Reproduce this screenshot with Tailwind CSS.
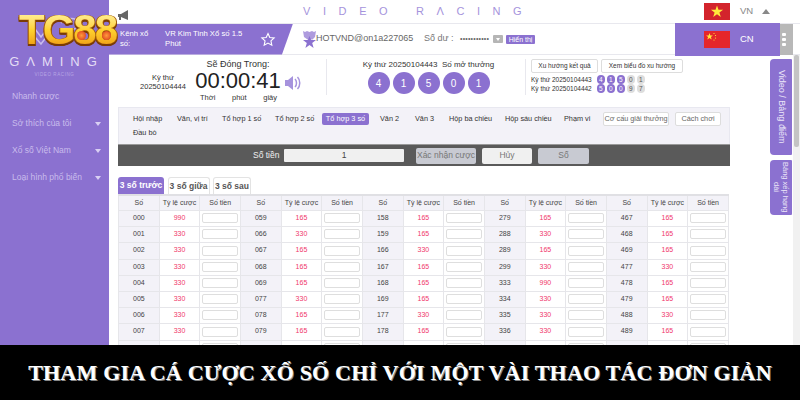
<!DOCTYPE html>
<html lang="vi">
<head>
    <meta charset="UTF-8">
    <title>Video Racing</title>
    <script src="https://cdn.jsdelivr.net/npm/@tailwindcss/browser@4"></script>
</head>
<body class="bg-white">
<div class="relative w-[800px] h-[400px] overflow-hidden flex font-['Liberation_Sans',sans-serif] text-[#333]">

    <!-- Sidebar -->
    <aside class="w-[109px] shrink-0 bg-[#8b71d0] text-[#c9bcec] text-[8.500px] pt-[54px]">
        <div class="text-center text-[#e4def5] text-[13px] tracking-[7px] pl-[4px] leading-[15px]">GΛMING</div>
        <div class="text-center text-[#b7a6e4] text-[4.500px] tracking-[0.6px] leading-[8px] mt-[2px]">VIDEO RACING</div>
        <ul class="mt-[4px]">
            <li class="h-[27px] pl-[12px] flex items-center">Nhanh cược</li>
            <li class="h-[27px] pl-[12px] pr-[8px] flex items-center justify-between">Sở thích của tôi<span class="border-x-[3px] border-t-[4px] border-x-transparent border-t-[#d9d0f3]"></span></li>
            <li class="h-[27px] pl-[12px] pr-[8px] flex items-center justify-between">Xổ số Việt Nam<span class="border-x-[3px] border-t-[4px] border-x-transparent border-t-[#d9d0f3]"></span></li>
            <li class="h-[27px] pl-[12px] pr-[8px] flex items-center justify-between">Loại hình phổ biến<span class="border-x-[3px] border-t-[4px] border-x-transparent border-t-[#d9d0f3]"></span></li>
        </ul>
    </aside>

    <main class="flex-1 min-w-0 flex flex-col">
        <!-- Top title -->
        <div class="h-[23px] shrink-0 flex items-center pl-[194px] text-[#a593dc] text-[11px] tracking-[12.600px] whitespace-nowrap">VIDEO RΛCING</div>

        <!-- Channel and account bar -->
        <div class="h-[32px] shrink-0 flex items-center border-y border-[#e8e8ee] text-[8px]">
            <div class="w-[184px] h-[31px] shrink-0 bg-[#8b71d0] [clip-path:polygon(0_0,100%_0,94%_100%,0_100%)] flex items-center text-white pl-[11px] text-[7.700px] leading-[10px]">
                <span class="w-[30px] mr-[15px]">Kênh xổ số:</span>
                <span class="w-[93px]">VR Kim Tinh Xổ số 1.5 Phút</span>
                <svg class="w-[16px] h-[15px] ml-[2px]" viewBox="0 0 24 24" fill="none" stroke="#fff" stroke-width="1.8"><path d="M12 2.500l2.900 6.300 6.900.8-5.100 4.700 1.400 6.800-6.100-3.400-6.100 3.400 1.400-6.800-5.100-4.700 6.900-.8z"/></svg>
            </div>
            <svg class="w-[13px] h-[17px] ml-[10px]" viewBox="0 0 13 17" fill="#8b71d0"><path d="M0 0l2 1 2-1 2.500 1L9 0l2 1 2-1-1 6-2.500 2.500h-5L1 6z" opacity=".7"/><path d="M6.500 5l1.600 4H13l-3.800 3 1.400 5-4.100-3-4.100 3 1.400-5L0 9h4.900z"/></svg>
            <span class="w-[108px] text-[#666] text-[9px] whitespace-nowrap">HOTVND@on1a227065</span>
            <span class="w-[36px] text-[#777] text-[9px] whitespace-nowrap">Số dư :</span>
            <span class="w-[33px] text-[#666] text-[7px] tracking-[0.2px] whitespace-nowrap">•••••••••••</span>
            <span class="w-[10px] h-[8px] bg-[#b5b5b5] rounded-[1px] flex items-center justify-center"><span class="border-x-[2.500px] border-t-[3px] border-x-transparent border-t-white"></span></span>
            <span class="w-[29px] bg-[#8b71d0] text-white text-[7px] h-[9px] leading-[9px] text-center rounded-[1px] ml-[3px] whitespace-nowrap">Hiển thị</span>
        </div>

        <!-- Timer, last result, trends -->
        <div class="h-[52px] shrink-0 flex pt-[4px]">
            <div class="w-[218px] shrink-0 flex border-r border-[#e8e8ee] h-[36px]">
                <div class="w-[86px] shrink-0 pt-[14px] pl-[30px] text-center text-[7.500px] leading-[9px]">
                    <div class="w-[48px]">Kỳ thứ<br>20250104444</div>
                </div>
                <div class="w-[86px] shrink-0 text-center">
                    <div class="text-[9px] leading-[10px] whitespace-nowrap">Sẽ Đóng Trong:</div>
                    <div class="text-[22px] leading-[22px] text-[#222] mt-[1px] whitespace-nowrap">00:00:41</div>
                    <div class="flex justify-between pl-[5px] pr-[4px] text-[7.500px] leading-[10px] mt-[1px]"><span>Thời</span><span>phút</span><span>giây</span></div>
                </div>
                <svg class="w-[18px] h-[18px] mt-[15px] ml-[3px]" viewBox="0 0 18 18" fill="#a693dd"><path d="M1 6h3l5-4v14l-5-4H1z"/><path d="M11 5c2 2 2 6 0 8M13.500 3c3 3 3 9 0 12" fill="none" stroke="#a693dd" stroke-width="1.500"/></svg>
            </div>
            <div class="w-[199px] shrink-0 flex flex-col items-center border-r border-[#e8e8ee] h-[36px] pl-[5px]">
                <div class="text-[8px] leading-[10px] mt-[1px] whitespace-nowrap">Kỳ thứ 20250104443 &nbsp;Số mở thưởng</div>
                <div class="flex gap-[3px] mt-[2px]">
                    <span class="w-[22px] h-[22px] rounded-full bg-[#8b71d0] text-white text-[10px] flex items-center justify-center">4</span>
                    <span class="w-[22px] h-[22px] rounded-full bg-[#8b71d0] text-white text-[10px] flex items-center justify-center">1</span>
                    <span class="w-[22px] h-[22px] rounded-full bg-[#8b71d0] text-white text-[10px] flex items-center justify-center">5</span>
                    <span class="w-[22px] h-[22px] rounded-full bg-[#8b71d0] text-white text-[10px] flex items-center justify-center">0</span>
                    <span class="w-[22px] h-[22px] rounded-full bg-[#8b71d0] text-white text-[10px] flex items-center justify-center">1</span>
                </div>
            </div>
            <div class="pl-[5px] text-[6.500px]">
                <div class="flex gap-[3px]">
                    <span class="w-[67px] h-[14px] border border-[#ddd] rounded-[2px] flex items-center justify-center whitespace-nowrap">Xu hướng kết quả</span>
                    <span class="w-[82px] h-[14px] border border-[#ddd] rounded-[2px] flex items-center justify-center whitespace-nowrap">Xem biểu đồ xu hướng</span>
                </div>
                <div class="flex items-center h-[9px] mt-[2px] gap-[1.500px] whitespace-nowrap">
                    <span class="w-[64px]">Kỳ thứ 20250104443</span>
                    <span class="w-[8.500px] h-[8.500px] rounded-full bg-[#8b71d0] text-white flex items-center justify-center">4</span>
                    <span class="w-[8.500px] h-[8.500px] rounded-full bg-[#8b71d0] text-white flex items-center justify-center">1</span>
                    <span class="w-[8.500px] h-[8.500px] rounded-full bg-[#8b71d0] text-white flex items-center justify-center">5</span>
                    <span class="w-[8.500px] h-[8.500px] rounded-full bg-[#ddd] text-[#555] flex items-center justify-center">0</span>
                    <span class="w-[8.500px] h-[8.500px] rounded-full bg-[#ddd] text-[#555] flex items-center justify-center">1</span>
                </div>
                <div class="flex items-center h-[9px] gap-[1.500px] whitespace-nowrap">
                    <span class="w-[64px]">Kỳ thứ 20250104442</span>
                    <span class="w-[8.500px] h-[8.500px] rounded-full bg-[#8b71d0] text-white flex items-center justify-center">5</span>
                    <span class="w-[8.500px] h-[8.500px] rounded-full bg-[#8b71d0] text-white flex items-center justify-center">0</span>
                    <span class="w-[8.500px] h-[8.500px] rounded-full bg-[#8b71d0] text-white flex items-center justify-center">0</span>
                    <span class="w-[8.500px] h-[8.500px] rounded-full bg-[#ddd] text-[#555] flex items-center justify-center">9</span>
                    <span class="w-[8.500px] h-[8.500px] rounded-full bg-[#ddd] text-[#555] flex items-center justify-center">7</span>
                </div>
            </div>
        </div>

        <div class="flex-1 min-h-0 flex">
            <div class="w-[621px] shrink-0 pl-[9px]">
                <!-- Play types -->
                <div class="h-[37px] bg-[#f3f2f8] border-t border-x border-[#e8e8f0] relative text-[7.300px] text-[#333]">
                    <div class="flex items-center h-[12px] mt-[5px] pl-[14px] whitespace-nowrap">
                        <span class="w-[44px]">Hội nhập</span>
                        <span class="w-[45px]">Văn, vị trí</span>
                        <span class="w-[53px]">Tổ hợp 1 số</span>
                        <span class="w-[47px]">Tổ hợp 2 số</span>
                        <span class="w-[47px] h-[12px] bg-[#8b71d0] text-white rounded-[2px] flex items-center justify-center mr-[11px]">Tổ hợp 3 số</span>
                        <span class="w-[35px]">Văn 2</span>
                        <span class="w-[34px]">Văn 3</span>
                        <span class="w-[56px]">Hộp ba chiều</span>
                        <span class="w-[59px]">Hộp sáu chiều</span>
                        <span class="w-[39px]">Phạm vi</span>
                        <span class="w-[66px] h-[14px] border border-[#ddd] bg-white rounded-[2px] flex items-center justify-center text-[#666] mr-[6px]">Cơ cấu giải thưởng</span>
                        <span class="w-[46px] h-[14px] border border-[#ddd] bg-white rounded-[2px] flex items-center justify-center text-[#666]">Cách chơi</span>
                    </div>
                    <div class="pl-[14px] mt-[2px] leading-[12px]">Đầu bò</div>
                </div>

                <!-- Stake bar -->
                <div class="h-[22px] bg-[#5a5a5a] border-t border-[#999] flex items-center text-[8.500px] pl-[135px] whitespace-nowrap">
                    <span class="w-[31px] text-[#efefef]">Số tiền</span>
                    <span class="w-[120px] h-[13px] bg-[#f0f0f0] rounded-[1px] text-[#444] flex items-center justify-center">1</span>
                    <span class="w-[60px] h-[16px] ml-[12px] bg-[#c8cad2] text-[#777] rounded-[2px] flex items-center justify-center">Xác nhận cược</span>
                    <span class="w-[50px] h-[16px] ml-[6px] bg-[#f0f0f0] text-[#777] rounded-[2px] flex items-center justify-center">Hủy</span>
                    <span class="w-[51px] h-[16px] ml-[6px] bg-[#c8cad2] text-[#777] rounded-[2px] flex items-center justify-center">Số</span>
                </div>

                <!-- Group tabs -->
                <div class="flex gap-[3.500px] mt-[11px] h-[17px] text-[8.500px] font-bold text-[#555] whitespace-nowrap">
                    <span class="w-[46px] bg-[#8b71d0] text-white rounded-t-[3px] flex items-center justify-center">3 số trước</span>
                    <span class="w-[42px] bg-white border border-b-0 border-[#e3e3e3] rounded-t-[3px] flex items-center justify-center">3 số giữa</span>
                    <span class="w-[38px] bg-white border border-b-0 border-[#e3e3e3] rounded-t-[3px] flex items-center justify-center">3 số sau</span>
                </div>

                <!-- Odds table -->
                <table class="w-[611px] table-fixed border-collapse border-t-2 border-[#e0e0e4] text-[7px] text-center text-[#444]">
                    <thead>
                        <tr id="headRow" class="h-[15px] bg-[#f3f2f8]"></tr>
                    </thead>
                    <tbody id="oddsBody"></tbody>
                </table>
            </div>

            <!-- Side tabs -->
            <div class="flex-1 flex flex-col pl-[40px] -mt-[48px] gap-[5px] text-white">
                <div class="w-[22px] h-[96px] bg-[#8b71d0] rounded-l-[4px] rounded-r-[1px] flex items-center justify-center [writing-mode:vertical-rl] whitespace-nowrap text-[9px] text-[#ebe6f8]">Video / Bảng điểm</div>
                <div class="w-[22px] h-[55px] bg-[#8b71d0] rounded-l-[4px] rounded-r-[1px] flex items-center justify-center [writing-mode:vertical-rl] text-center text-[7.500px] leading-[9px] text-[#ebe6f8]">Bảng xếp hạng dài</div>
            </div>
        </div>
    </main>

    <!-- Logo over sidebar edge -->
    <div class="absolute left-[19px] top-[9px] w-[100px] h-[42px]">
        <svg class="absolute left-[16px] top-[6px] w-[44px] h-[30px]" viewBox="0 0 44 30" fill="none" stroke="#c9bcec" stroke-width="1.500"><path d="M0 14l6 8 9-12M0 22l6 7 9-12"/><path d="M26 8c6-6 16-6 17 0 0 5-6 8-12 9"/></svg>
        <div class="absolute inset-0 text-[42px] leading-[42px] font-bold tracking-[-2px] bg-linear-to-b from-[#fff6a8] via-[#ffd22e] to-[#e98f0c] bg-clip-text text-transparent [filter:drop-shadow(1px_0_0_#a35c0a)_drop-shadow(-1px_0_0_#a35c0a)_drop-shadow(0_2px_0_#7a3b05)] whitespace-nowrap">TG88</div>
        <span class="absolute left-[58px] top-[22px] w-[9px] h-[9px] rounded-full bg-radial from-[#ff9a3c] to-[#d5201a]"></span>
        <span class="absolute left-[83px] top-[22px] w-[9px] h-[9px] rounded-full bg-radial from-[#ff9a3c] to-[#d5201a]"></span>
    </div>
    <svg class="absolute left-[118px] top-[10px] w-[11px] h-[11px]" viewBox="0 0 11 11" fill="#666"><path d="M0 4h3l7-4v10L3 7v3H1V7H0z"/></svg>

    <!-- Language menu -->
    <div class="absolute left-[675px] top-0 w-[105px] text-[9.500px]">
        <div class="h-[23px] bg-white flex items-center pl-[29px] text-[#888]">
            <svg class="w-[26px] h-[17px]" viewBox="0 0 26 17"><rect width="26" height="17" fill="#d3242c"/><path d="M13 2.500l1.500 4.300h4.600l-3.700 2.800 1.400 4.400L13 11.300 9.200 14l1.400-4.400-3.700-2.800h4.600z" fill="#ffe93b"/></svg>
            <span class="ml-[10px]">VN</span>
            <span class="ml-[9px] border-x-[4px] border-b-[5px] border-x-transparent border-b-[#888]"></span>
        </div>
        <div class="h-[33px] bg-[#8b71d0] flex items-center pl-[29px] text-white">
            <svg class="w-[26px] h-[17px]" viewBox="0 0 26 17"><rect width="26" height="17" fill="#e5262b"/><path d="M5.500 2l.9 2.400h2.500l-2 1.500.8 2.500-2.200-1.500-2.200 1.500.8-2.500-2-1.500h2.500z" fill="#ffe93b"/><circle cx="10" cy="2.500" r=".6" fill="#ffe93b"/><circle cx="11.500" cy="4.500" r=".6" fill="#ffe93b"/><circle cx="11.500" cy="7" r=".6" fill="#ffe93b"/><circle cx="10" cy="9" r=".6" fill="#ffe93b"/></svg>
            <span class="ml-[10px]">CN</span>
        </div>
    </div>
    <div class="absolute left-[780px] top-[24px] w-[13px] h-[31px] bg-[#b8b8b8] flex flex-col items-start justify-center gap-[2px] pl-[2px]">
        <span class="w-[4px] h-[3px] bg-white rounded-[1px]"></span>
        <span class="w-[4px] h-[3px] bg-white rounded-[1px]"></span>
        <span class="w-[4px] h-[3px] bg-white rounded-[1px]"></span>
    </div>

    <!-- Scrollbar -->
    <div class="absolute left-[793px] top-[55px] bottom-0 w-[7px] bg-[#f1f1f1]">
        <div class="w-[5px] h-[92px] mx-auto bg-[#c4c4c4] rounded-[2px]"></div>
    </div>

    <!-- Caption banner -->
    <div class="absolute left-0 bottom-0 w-full h-[55px] bg-black flex items-center justify-center text-white font-['Liberation_Serif',serif] font-bold text-[22px] tracking-[0.2px] [text-shadow:1px_1px_0_#888] whitespace-nowrap">THAM GIA CÁ CƯỢC XỔ SỐ CHỈ VỚI MỘT VÀI THAO TÁC ĐƠN GIẢN</div>
</div>

<script>
    const columns = [
        [['000', 990], ['001', 330], ['002', 330], ['003', 330], ['004', 330], ['005', 330], ['006', 330], ['007', 330], ['008', 330]],
        [['059', 165], ['066', 330], ['067', 165], ['068', 165], ['069', 165], ['077', 330], ['078', 165], ['079', 165], ['088', 330]],
        [['158', 165], ['159', 165], ['166', 330], ['167', 165], ['168', 165], ['169', 165], ['177', 330], ['178', 165], ['179', 165]],
        [['279', 165], ['288', 330], ['289', 165], ['299', 330], ['333', 990], ['334', 330], ['335', 330], ['336', 330], ['337', 330]],
        [['467', 165], ['468', 165], ['469', 165], ['477', 330], ['478', 165], ['479', 165], ['488', 330], ['489', 165], ['499', 330]]
    ];

    const headRow = document.getElementById('headRow');
    columns.forEach(() => {
        headRow.innerHTML += `
            <th class="border border-[#e6e6ea] font-normal">Số</th>
            <th class="border border-[#e6e6ea] font-normal">Tỷ lệ cược</th>
            <th class="border border-[#e6e6ea] font-normal">Số tiền</th>
        `;
    });

    const oddsBody = document.getElementById('oddsBody');
    for (let i = 0; i < 9; i++) {
        const row = document.createElement('tr');
        // rows in the source are about 16.2px, tables snap to whole pixels
        row.className = i % 5 === 2 ? 'h-[17px]' : 'h-[16px]';
        columns.forEach(col => {
            row.innerHTML += `
                <td class="border border-[#e6e6ea] bg-[#f3f2f8]">${col[i][0]}</td>
                <td class="border border-[#e6e6ea] text-[#f0386b]">${col[i][1]}</td>
                <td class="border border-[#e6e6ea] px-[2px]"><div class="h-[10px] bg-white border border-[#dedede] rounded-[2px]"></div></td>
            `;
        });
        oddsBody.appendChild(row);
    }
</script>
</body>
</html>
